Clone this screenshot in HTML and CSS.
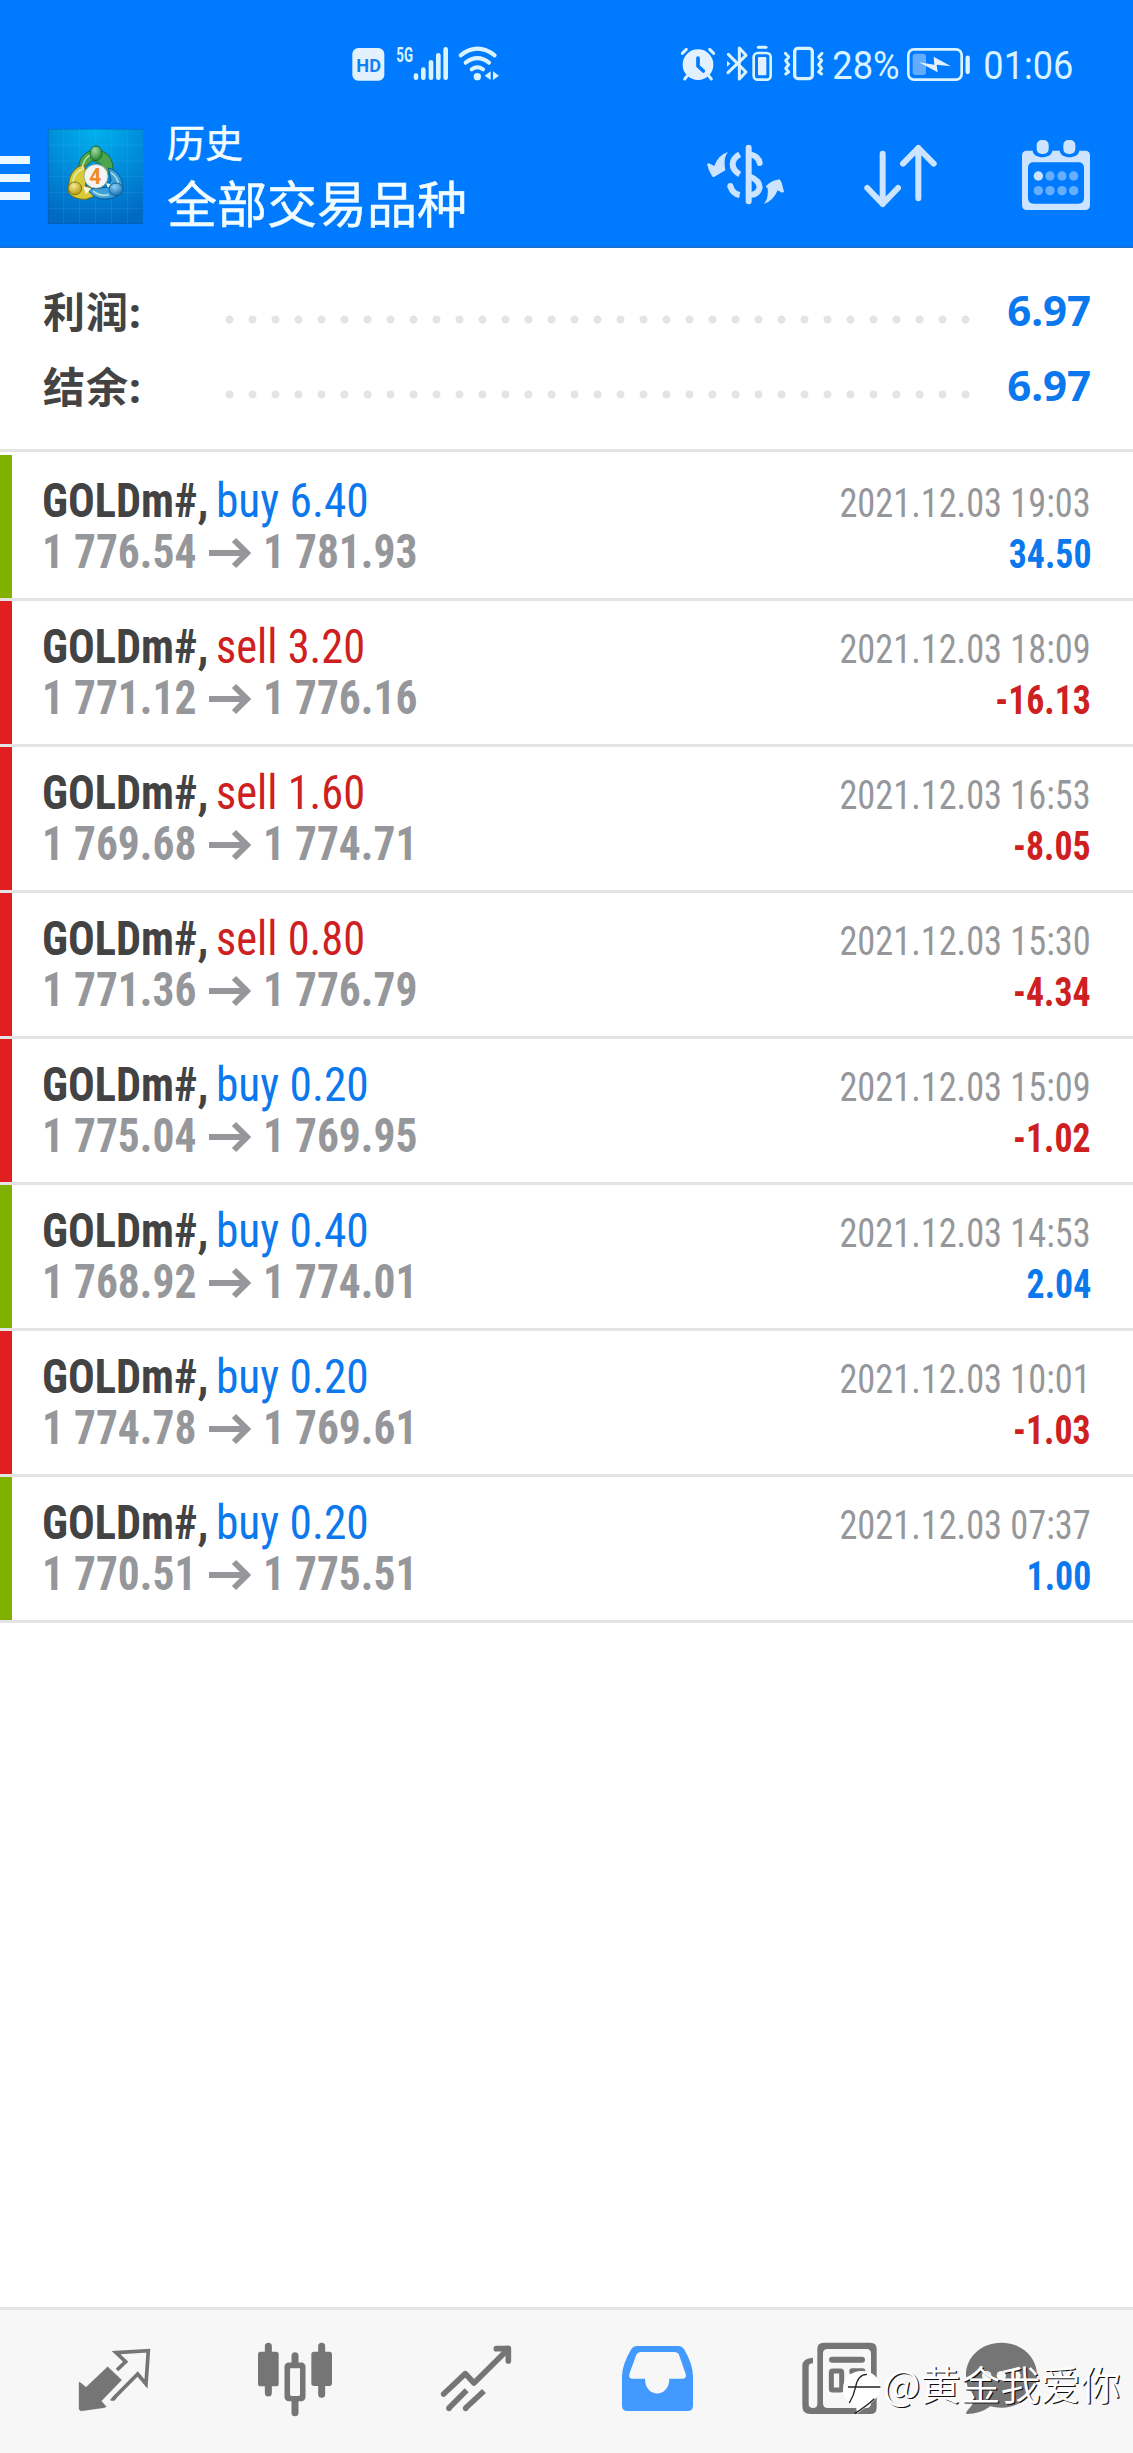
FILE: index.html
```html
<!DOCTYPE html>
<html lang="zh-CN">
<head>
<meta charset="utf-8">
<title>历史</title>
<link rel="stylesheet" href="styles.css">
</head>
<body>
<header class="header">
  <div class="status">
    <svg class="status-left" width="150" height="42" viewBox="36 36 450 126">
      <rect x="37" y="54" width="96" height="98" rx="18" fill="#e3f1ff"/>
      <text x="49" y="125" font-size="57" font-weight="700" fill="#1280f5" textLength="74" lengthAdjust="spacingAndGlyphs">HD</text>
      <text x="169" y="95" font-size="60" font-weight="700" textLength="50" lengthAdjust="spacingAndGlyphs">5G</text>
      <g stroke="currentColor" stroke-width="14" stroke-linecap="round" fill="none">
        <path d="M228 137v6M250 119v24M273 97v46M295 76v67M317 58v85"/>
        <path d="M362 76Q412 36 464 76M377 98Q412 71 447 98M395 118Q412 106 429 118" stroke-width="12"/>
      </g>
      <circle cx="412" cy="140" r="11"/>
      <path d="M452 124v26l-18-13zM459 124v26l18-13z"/>
    </svg>
    <svg class="status-right" width="400" height="42" viewBox="27 36 1200 126">
      <circle cx="84" cy="104" r="46" fill="#e3f1ff"/>
      <g fill="none" stroke="currentColor" stroke-linecap="round" stroke-linejoin="round" stroke-width="9">
        <path d="M37 70 49 58M131 70 119 58M53 136l-9 11M115 136l9 11"/>
        <path d="M84 84v24l16 15" stroke="#007aff" stroke-width="11"/>
        <path d="M175 73 228 126 208 147V54L228 76 174 128"/>
        <rect x="251" y="69" width="51" height="80" rx="12" stroke-width="8"/>
        <path d="M265 52h23" />
        <rect x="374" y="55" width="53" height="91" rx="10" stroke-width="10"/>
        <path d="M346 70l10 11-9 11 9 12-9 11 9 11-9 6M456 70l-10 11 9 11-9 12 9 11-9 11 9 6"/>
        <rect x="715" y="58" width="160" height="91" rx="17" stroke-width="8"/>
        <path d="M893 83v43" stroke-width="13"/>
      </g>
      <path d="M171 92v18l10-9z"/>
      <rect x="264" y="81" width="25" height="55" rx="3" fill="#e3f1ff"/>
      <rect x="728" y="71" width="40" height="64" rx="8" fill="#62abff"/>
      <path d="M747 97 793 104 791 80 843 109 800 104 803 127Z" fill="#e3f1ff"/>
      <text x="487" y="148" font-size="114" textLength="202" lengthAdjust="spacingAndGlyphs">28%</text>
      <text x="940" y="148" font-size="114" textLength="270" lengthAdjust="spacingAndGlyphs">01:06</text>
    </svg>
  </div>
  <div class="toolbar">
    <svg class="menu" width="30" height="45" viewBox="0 0 30 45"><path d="M0 1h30v8H0zM0 19h30v8H0zM0 37h30v8H0z" fill="#ebf8ff"/></svg>
    <svg class="logo" width="95" height="95" viewBox="144 57 285 285">
      <defs>
        <radialGradient id="sky" cx=".5" cy="0" r="1"><stop offset="0" stop-color="#00b2ee"/><stop offset=".55" stop-color="#0089d8"/><stop offset="1" stop-color="#0069c3"/></radialGradient>
        <radialGradient id="green" cx=".4" cy=".3" r=".7"><stop offset="0" stop-color="#a4dda0"/><stop offset="1" stop-color="#268432"/></radialGradient>
        <radialGradient id="gold" cx=".4" cy=".3" r=".7"><stop offset="0" stop-color="#f4ec8a"/><stop offset="1" stop-color="#b79a17"/></radialGradient>
        <radialGradient id="blue" cx=".4" cy=".3" r=".7"><stop offset="0" stop-color="#8ed0f8"/><stop offset="1" stop-color="#1473b5"/></radialGradient>
      </defs>
      <path fill="url(#sky)" d="M144 57h285v285H144z"/>
      <path d="M191 57v285M239 57v285M287 57v285M335 57v285M383 57v285M144 105h285M144 153h285M144 200h285M144 248h285M144 296h285" stroke="#4dc0f0" stroke-opacity=".28" stroke-width="2"/>
      <path d="M144 58h285M145 57v285M144 341h285" stroke="#06549c" stroke-opacity=".6" stroke-width="2"/>
      <g stroke-width="3">
        <path d="M237 178C232 142 262 119 288 120 322 121 342 151 338 178L318 196 300 160 276 152 258 168Z" fill="#4ba54c" stroke="#236c35"/>
        <path d="M254 165C228 167 207 192 207 222L204 242C208 258 232 269 258 268L286 258 282 236 256 228 258 204Z" fill="#d9cb36" stroke="#766e18"/>
        <path d="M325 174C350 180 369 205 367 230 371 249 352 265 316 267 291 268 272 256 264 237L300 234 325 232 333 210Z" fill="#3ba0dc" stroke="#0c5792"/>
        <path d="M246 174Q256 131 287 132M218 217Q224 183 251 176M332 187Q354 201 355 224M279 243Q300 261 326 254" fill="none" stroke="#e4f8cf" stroke-opacity=".7" stroke-width="5"/>
        <path d="M250 230l24 5-16 18zM318 220l14 2-8 12z" fill="#f8f6df" stroke="none"/>
        <ellipse cx="288" cy="130" rx="18" ry="22" fill="url(#green)" stroke="#1d6c2b"/>
        <ellipse cx="225" cy="235" rx="20" ry="19" fill="url(#gold)" stroke="#82751b"/>
        <ellipse cx="348" cy="238" rx="21" ry="19" fill="url(#blue)" stroke="#135e99"/>
      </g>
      <circle cx="288" cy="199" r="36" fill="#f4f4f4" stroke="#77917a" stroke-width="2"/>
      <text x="268" y="221" font-size="64" font-weight="700" fill="#f08a24" textLength="36" lengthAdjust="spacingAndGlyphs">4</text>
    </svg>
    <div class="titles">
      <div class="subtitle">历史</div>
      <h1 class="title">全部交易品种</h1>
    </div>
    <div class="actions">
      <svg width="80" height="72" viewBox="48 60 240 216">
        <path d="M114 96Q99 113 106 151L72 171 67 170Q55 151 51 132L57 130 73 138Q84 105 114 96ZM221 252Q236 238 233 205L227 200Q241 182 269 178L275 188 282 215 276 218 263 211Q250 243 221 252Z"/>
        <g fill="none" stroke="currentColor" stroke-width="18">
          <path d="M176 83v161" stroke-linecap="round"/>
          <path d="M149 103Q128 115 128 132 128 151 149 163M121 198Q127 221 149 225"/>
          <path d="M121 198v1M209 129Q206 108 180 103" stroke-linecap="round"/>
          <path d="M181 170Q208 181 209 202 205 223 181 225"/>
        </g>
      </svg>
      <svg width="76" height="72" viewBox="519 60 228 216"><path d="M578 101v151M532 204l46 48 46-48M685 235V84M639 131l46-47 46 47" fill="none" stroke="currentColor" stroke-width="18" stroke-linecap="round" stroke-linejoin="round"/></svg>
      <svg width="75" height="75" viewBox="987 48 225 225">
        <path fill-rule="evenodd" d="M1011 92h17c2 26 56 26 59 0h22c3 26 56 26 59 0h17q15 0 15 15v148q0 15-15 15h-174q-15 0-15-15V107q0-15 15-15zM1031 127q-17 0-17 17v90q0 17 17 17h134q17 0 17-17v-90q0-17-17-17z"/>
        <rect x="1040" y="60" width="36" height="42" rx="15"/><rect x="1120" y="60" width="36" height="42" rx="15"/>
        <circle cx="1045" cy="168" r="14"/>
        <g fill="#66afff"><circle cx="1080" cy="168" r="14"/><circle cx="1116" cy="168" r="14"/><circle cx="1151" cy="168" r="14"/><circle cx="1045" cy="212" r="14"/><circle cx="1080" cy="212" r="14"/><circle cx="1116" cy="212" r="14"/><circle cx="1151" cy="212" r="14"/></g>
      </svg>
    </div>
  </div>
</header>
<main class="content">
  <section class="summary">
    <div class="sum-row"><span class="sum-label">利润:</span><span class="dots"></span><span class="sum-value">6.97</span></div>
    <div class="sum-row"><span class="sum-label">结余:</span><span class="dots"></span><span class="sum-value">6.97</span></div>
  </section>
  <ul class="deals">
    <li class="deal win">
      <div class="line"><b class="symbol">GOLDm#,</b><span class="side buy">buy 6.40</span><span class="date">2021.12.03 19:03</span></div>
      <div class="line"><span class="price">1 776.54</span><svg class="arrow" viewBox="0 0 42 30"><path d="M0 15h37M25 2l13 13-13 13"/></svg><span class="price">1 781.93</span><span class="amount buy">34.50</span></div>
    </li>
    <li class="deal loss">
      <div class="line"><b class="symbol">GOLDm#,</b><span class="side sell">sell 3.20</span><span class="date">2021.12.03 18:09</span></div>
      <div class="line"><span class="price">1 771.12</span><svg class="arrow" viewBox="0 0 42 30"><path d="M0 15h37M25 2l13 13-13 13"/></svg><span class="price">1 776.16</span><span class="amount sell">-16.13</span></div>
    </li>
    <li class="deal loss">
      <div class="line"><b class="symbol">GOLDm#,</b><span class="side sell">sell 1.60</span><span class="date">2021.12.03 16:53</span></div>
      <div class="line"><span class="price">1 769.68</span><svg class="arrow" viewBox="0 0 42 30"><path d="M0 15h37M25 2l13 13-13 13"/></svg><span class="price">1 774.71</span><span class="amount sell">-8.05</span></div>
    </li>
    <li class="deal loss">
      <div class="line"><b class="symbol">GOLDm#,</b><span class="side sell">sell 0.80</span><span class="date">2021.12.03 15:30</span></div>
      <div class="line"><span class="price">1 771.36</span><svg class="arrow" viewBox="0 0 42 30"><path d="M0 15h37M25 2l13 13-13 13"/></svg><span class="price">1 776.79</span><span class="amount sell">-4.34</span></div>
    </li>
    <li class="deal loss">
      <div class="line"><b class="symbol">GOLDm#,</b><span class="side buy">buy 0.20</span><span class="date">2021.12.03 15:09</span></div>
      <div class="line"><span class="price">1 775.04</span><svg class="arrow" viewBox="0 0 42 30"><path d="M0 15h37M25 2l13 13-13 13"/></svg><span class="price">1 769.95</span><span class="amount sell">-1.02</span></div>
    </li>
    <li class="deal win">
      <div class="line"><b class="symbol">GOLDm#,</b><span class="side buy">buy 0.40</span><span class="date">2021.12.03 14:53</span></div>
      <div class="line"><span class="price">1 768.92</span><svg class="arrow" viewBox="0 0 42 30"><path d="M0 15h37M25 2l13 13-13 13"/></svg><span class="price">1 774.01</span><span class="amount buy">2.04</span></div>
    </li>
    <li class="deal loss">
      <div class="line"><b class="symbol">GOLDm#,</b><span class="side buy">buy 0.20</span><span class="date">2021.12.03 10:01</span></div>
      <div class="line"><span class="price">1 774.78</span><svg class="arrow" viewBox="0 0 42 30"><path d="M0 15h37M25 2l13 13-13 13"/></svg><span class="price">1 769.61</span><span class="amount sell">-1.03</span></div>
    </li>
    <li class="deal win">
      <div class="line"><b class="symbol">GOLDm#,</b><span class="side buy">buy 0.20</span><span class="date">2021.12.03 07:37</span></div>
      <div class="line"><span class="price">1 770.51</span><svg class="arrow" viewBox="0 0 42 30"><path d="M0 15h37M25 2l13 13-13 13"/></svg><span class="price">1 775.51</span><span class="amount buy">1.00</span></div>
    </li>
  </ul>
</main>
<nav class="nav">
  <svg width="76" height="80" viewBox="231 150 228 240">
    <path d="M323 230 365 270 304 333 319 350 313 353 243 363 237 358V276L243 279 258 292Z" stroke="currentColor" stroke-width="1" stroke-linejoin="round"/>
    <path d="M351 240 377 215 348 188 445 182 438 282 413 252 338 328" fill="none" stroke="currentColor" stroke-width="11"/>
    <path d="M330 329l7-6h14l-8 9h-10z"/>
  </svg>
  <svg width="80" height="80" viewBox="765 150 240 240">
    <path d="M805 169v140M965 169v144M885 197v30M885 330v38" stroke="currentColor" stroke-width="21" stroke-linecap="round"/>
    <rect x="774" y="185" width="62" height="104" rx="8"/><rect x="934" y="185" width="62" height="103" rx="8"/>
    <rect x="862" y="226" width="46" height="99" rx="4" fill="none" stroke="currentColor" stroke-width="17"/>
    <rect x="871" y="235" width="29" height="83" rx="7" fill="#f7f7f7"/>
  </svg>
  <svg class="trend" width="76" height="80" viewBox="174 150 228 240">
    <path d="M191 312 256 251 282 279 384 178M349 176h36v37" fill="none" stroke="currentColor" stroke-width="17" stroke-linecap="round" stroke-linejoin="round"/>
    <path d="M376 167h10q7 0 7 8v12h-17z"/>
    <path d="M260 301 207 354M312 303 257 354" stroke="currentColor" stroke-width="17"/><circle cx="207" cy="355" r="8.500"/><circle cx="257" cy="355" r="8.500"/>
  </svg>
  <svg class="active" width="77" height="80" viewBox="717 150 231 240">
    <path fill-rule="evenodd" d="M770 168H896Q906 168 912 177 938 221 939 258V347Q939 363 923 363H742Q726 363 726 347V258Q727 222 754 177 760 168 770 168ZM782 186Q773 187 769 194L749 249Q744 265 756 266H795C795 325 868 325 868 266H908Q921 265 917 252L897 194Q894 187 882 186Z"/>
  </svg>
  <svg class="news" width="80" height="80" viewBox="120 150 240 240">
    <path fill-rule="evenodd" d="M191 158h140q19 0 19 19v176q0 19-19 19H151q-24 0-24-24V228q0-24 32-25v17q-13 0-13 10v112q0 12 13 12 13 0 13-12V177q0-19 19-19zM203 177q-14 0-14 14v149q0 14 14 14h116q14 0 14-14V191q0-14-14-14z"/>
    <rect x="207" y="200" width="108" height="18" rx="9"/>
    <rect x="214" y="243" width="31" height="57" rx="4" fill="none" stroke="currentColor" stroke-width="15"/>
    <rect x="268" y="235" width="48" height="18" rx="8"/><rect x="268" y="262" width="48" height="18" rx="8"/><rect x="268" y="289" width="48" height="18" rx="8"/>
  </svg>
  <svg class="chat" width="77" height="80" viewBox="609 150 231 240">
    <path d="M724 158C784 158 831 201 831 255S784 353 724 353Q705 353 691 349 661 372 620 372 614 370 626 357 642 341 641 326 618 298 618 255C618 201 664 158 724 158Z"/>
    <g fill="#f7f7f7"><circle cx="680" cy="257" r="14"/><circle cx="724" cy="257" r="14"/><circle cx="768" cy="257" r="14"/></g>
  </svg>
</nav>
<div class="watermark">
  <svg width="40" height="46" viewBox="247 240 120 138">
    <path d="M306 243C340 243 361 264 361 294 361 324 329 345 292 371L289 347C262 341 250 320 250 296 250 265 276 243 306 243Z"/>
    <path d="M269 339Q283 316 288 290 295 253 322 253M265 291H362M285 371Q323 346 344 326" fill="none" stroke="#222" stroke-width="4"/>
  </svg>
  <span class="wm-text">@黄金我爱你</span>
</div>
</body>
</html>
```
FILE: styles.css
```css
* { box-sizing: border-box; }
body {
  margin: 0;
  height: 2453px;
  display: flex;
  flex-direction: column;
  position: relative;
  overflow: hidden;
  background: #fff;
  font-family: Roboto, sans-serif;
}
svg { display: block; flex: none; fill: currentColor; overflow: visible; }

.header {
  height: 248px;
  flex: none;
  background: #007aff;
  border-bottom: 2px solid #146fd6;
  color: #d9f3ff;
}
.status {
  height: 100px;
  display: flex;
  padding: 42px 54px 0 352px;
  justify-content: space-between;
}
.toolbar { display: flex; height: 146px; align-items: flex-start; }
.menu { margin-top: 55px; }
.logo { margin: 29px 0 0 18px; }
.titles {
  margin: 18px 0 0 24px;
  font-family: "Noto Sans CJK SC", sans-serif;
  color: #f0fcff;
  -webkit-text-stroke: .5px currentColor;
}
.subtitle { font-size: 38px; line-height: 46px; }
.title { margin: 7px 0 0; font-size: 50px; line-height: 60px; font-weight: 400; }
.actions {
  display: flex;
  gap: 77px;
  margin: 40px 39px 0 auto;
  color: #cce4ff;
}
.actions svg:last-child { margin: -4px 0 0 3px; }

.content { flex: 1; }
.summary {
  height: 204px;
  padding: 26px 42px 0 43px;
  border-bottom: 3px solid #e4e4e4;
  font: 700 42px/75px "Noto Sans", "Noto Sans CJK SC", sans-serif;
  color: #434343;
}
.sum-row { display: flex; height: 75px; }
.sum-label { width: 175px; letter-spacing: 1px; }
.dots {
  flex: none;
  width: 759px;
  height: 9px;
  margin-top: 41px;
  background: radial-gradient(circle at center, #e4e4e4 3.6px, transparent 4.4px) 0 0 / 23px 9px repeat-x;
}
.sum-value { margin-left: auto; line-height: 72px; color: #0b78ee; }

.deals { list-style: none; margin: 3px 0 0; padding: 0; }
.deal {
  height: 146px;
  padding: 20px 42px 0;
  border-bottom: 3px solid #e4e4e4;
  background: linear-gradient(var(--mark), var(--mark)) 0 0 / 12px 100% no-repeat;
  font-family: "Roboto Condensed", Roboto, sans-serif;
  font-stretch: 75%;
}
.win { --mark: #80b000; }
.loss { --mark: #e11e20; }
.line {
  height: 51px;
  display: flex;
  align-items: baseline;
  line-height: 51px;
  white-space: nowrap;
}
.symbol, .side, .price { font-size: 48px; transform-origin: 0 0; }
.symbol { width: 174px; color: #434343; transform: scaleX(.925); }
.side { transform: scaleX(.945); }
.side.sell { transform: scaleX(.925); }
.price { width: 167px; font-weight: 700; color: #96979b; transform: scaleX(.905); }
.arrow {
  width: 42px;
  height: 30px;
  margin-right: 12px;
  fill: none;
  stroke: currentColor;
  stroke-width: 6px;
  color: #96979b;
}
.date, .amount { margin-left: auto; font-size: 40px; transform-origin: 100% 0; }
.date { color: #96979b; transform: scaleX(.908); }
.amount { font-weight: 700; transform: scaleX(.895); }
.buy { color: #0b78ee; }
.sell { color: #cf2021; }

.nav {
  height: 146px;
  flex: none;
  display: flex;
  gap: 102px;
  padding: 30px 0 0 77px;
  background: #f7f7f7;
  border-top: 3px solid #e4e4e4;
  color: #757575;
}
.nav .trend { margin-left: 1px; }
.nav .active { margin-left: 3px; color: #429aff; }
.nav .news { margin-left: 2px; }
.nav .chat { margin-left: -19px; }

.watermark {
  position: absolute;
  left: 842px;
  top: 2370px;
  display: flex;
  color: #fff;
}
.wm-text {
  margin: -16px 0 0 1px;
  font: 350 40px/58px "Noto Sans CJK SC", sans-serif;
  text-shadow: 1.300px 1px 0 #111;
}
```
